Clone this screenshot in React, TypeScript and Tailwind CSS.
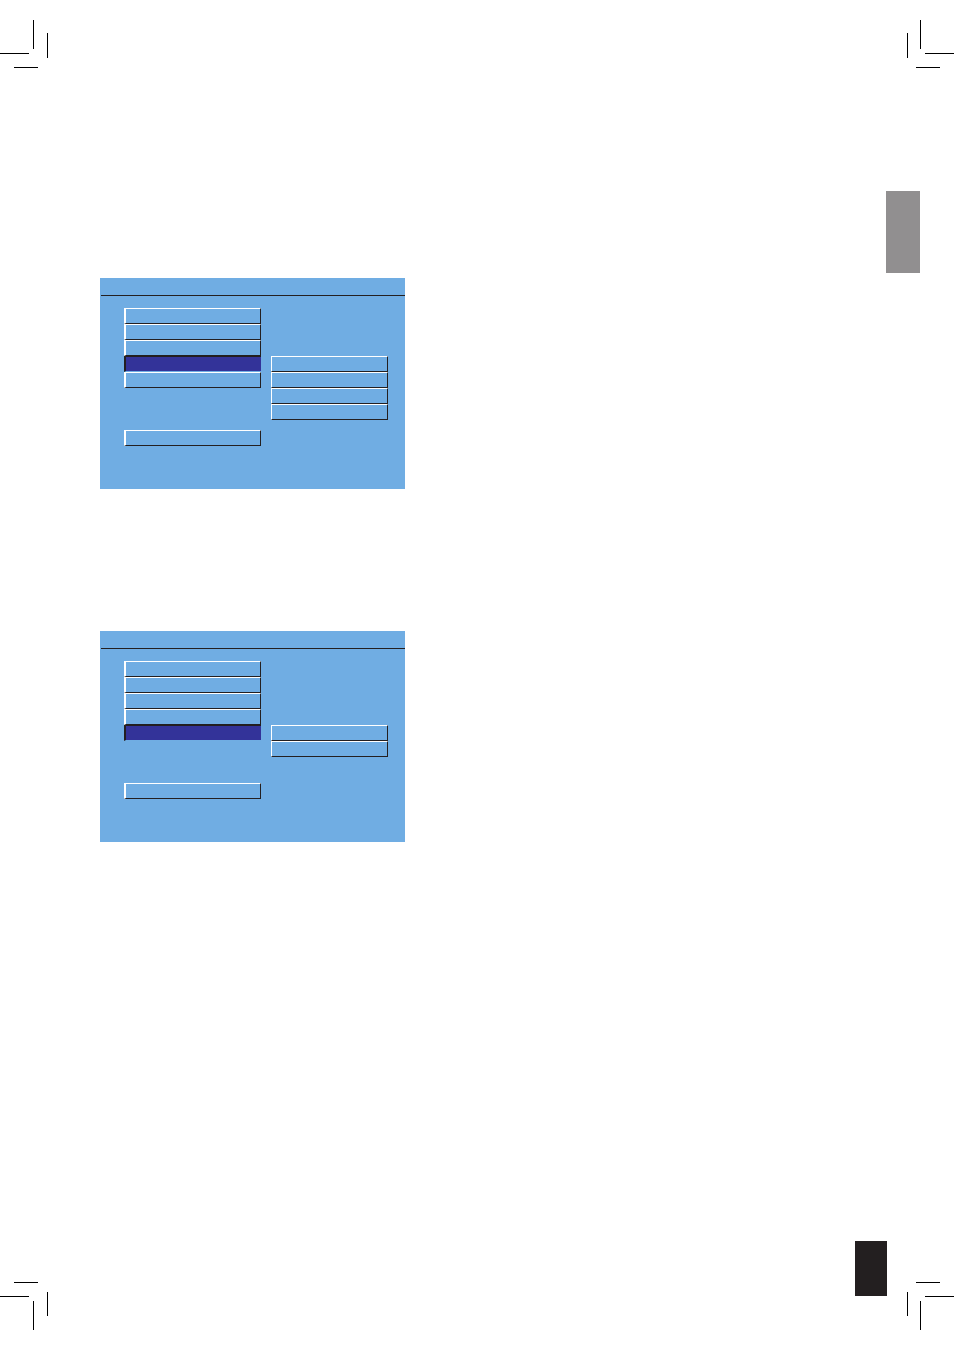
import clsx from "clsx";

type Rect = [x: number, y: number, w: number, h: number];

interface MenuButtonProps {
    label: string;
    selected?: boolean;
    thin?: boolean;
}

interface MenuPanelProps {
    title: string;
    items: string[];
    selected: number;
    options: string[];
    optionsClassName: string;
}

const topLeft: Rect[] = [[33, 20, 1, 29], [47, 33, 1, 25], [0, 53, 29, 1], [14, 67, 24, 1]];
const topRight: Rect[] = [[14, 20, 1, 29], [1, 33, 1, 25], [19, 53, 29, 1], [10, 67, 24, 1]];
const bottomLeft: Rect[] = [[14, 0, 24, 1], [0, 14, 29, 1], [47, 10, 1, 24], [33, 19, 1, 29]];
const bottomRight: Rect[] = [[10, 0, 24, 1], [19, 14, 29, 1], [1, 10, 1, 24], [14, 19, 1, 29]];

function CropMarks({ marks }: { marks: Rect[] }) {
    return (
        <svg className="shrink-0" width="48" height="68" viewBox="0 0 48 68" shapeRendering="crispEdges" aria-hidden="true">
            {marks.map(([x, y, w, h]) => (
                <rect key={`${x}-${y}`} x={x} y={y} width={w} height={h} fill="#000" />
            ))}
        </svg>
    );
}

function MenuButton({ label, selected, thin }: MenuButtonProps) {
    return (
        <button
            type="button"
            aria-label={label}
            className={clsx(
                "block h-4 w-full border-t border-b",
                thin ? "border-l" : "border-l-2",
                selected
                    ? "border-t-[#231f20] border-b-[#70ade3] border-l-[#231f20] bg-[#333399]"
                    : "border-r border-t-white border-r-[#231f20] border-b-[#231f20] border-l-white"
            )}
        />
    );
}

function MenuPanel({ title, items, selected, options, optionsClassName }: MenuPanelProps) {
    return (
        <section aria-label={title} className="bg-[#70ade3] pb-[43px]">
            {/* Title bar */}
            <div className="ml-px h-[18px] border-b border-[#231f20]" />

            <div className="grid grid-cols-[137fr_117fr] gap-x-[10px] pt-3 pr-[17px] pl-6">
                <div>
                    {items.map((item, i) => (
                        <MenuButton key={item} label={item} selected={i === selected} />
                    ))}
                    <div className="pt-[42px]">
                        <MenuButton label="Back" />
                    </div>
                </div>
                <div className={optionsClassName}>
                    {options.map((option) => (
                        <MenuButton key={option} label={option} thin />
                    ))}
                </div>
            </div>
        </section>
    );
}

const items = ["Item 1", "Item 2", "Item 3", "Item 4", "Item 5"];

export default function App() {
    return (
        <div className="flex min-h-screen flex-col bg-white">
            <header className="flex justify-between">
                <CropMarks marks={topLeft} />
                <CropMarks marks={topRight} />
            </header>

            <div className="flex flex-1 items-start justify-between">
                <main className="flex w-full max-w-[405px] flex-col gap-[142px] pt-[210px] pl-[100px]">
                    <MenuPanel
                        title="Menu 1"
                        items={items}
                        selected={3}
                        options={["Option 1", "Option 2", "Option 3", "Option 4"]}
                        optionsClassName="pt-12"
                    />
                    <MenuPanel
                        title="Menu 2"
                        items={items}
                        selected={4}
                        options={["Option 1", "Option 2"]}
                        optionsClassName="pt-16"
                    />
                </main>

                {/* Side tab */}
                <aside className="pt-[123px] pr-[34px]">
                    <div className="h-[82px] w-[34px] bg-[#918f90]" />
                </aside>
            </div>

            <footer className="flex items-end justify-between">
                <CropMarks marks={bottomLeft} />
                <div className="flex items-end gap-[19px]">
                    {/* Page number block */}
                    <div className="mb-[54px] h-[55px] w-8 bg-[#231f20]" />
                    <CropMarks marks={bottomRight} />
                </div>
            </footer>
        </div>
    );
}
